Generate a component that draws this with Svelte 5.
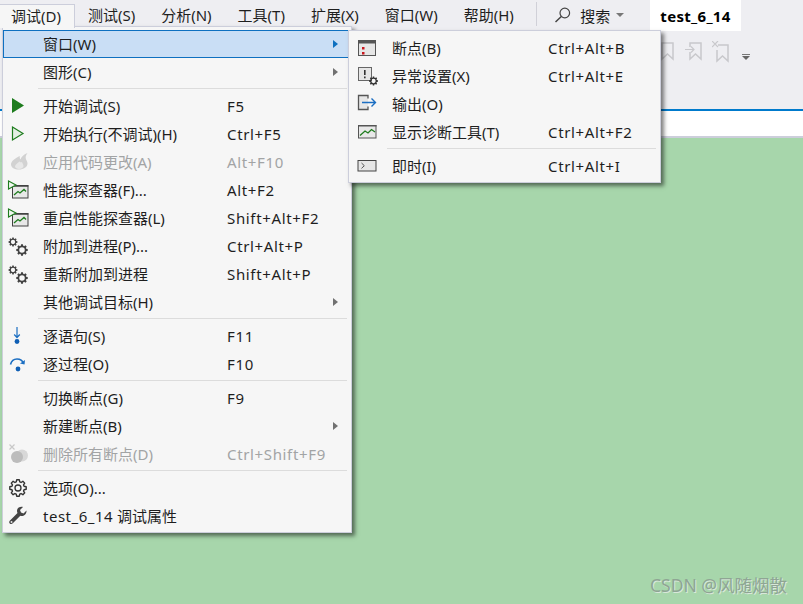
<script>
  const menus = ["调试(D)", "测试(S)", "分析(N)", "工具(T)", "扩展(X)", "窗口(W)", "帮助(H)"];

  const items = [
    { label: "窗口(W)", arrow: true, active: true },
    { label: "图形(C)", arrow: true },
    { sep: true },
    { icon: "play", label: "开始调试(S)", key: "F5" },
    { icon: "playo", label: "开始执行(不调试)(H)", key: "Ctrl+F5" },
    { icon: "flame", label: "应用代码更改(A)", key: "Alt+F10", off: true },
    { icon: "profiler", label: "性能探查器(F)...", key: "Alt+F2" },
    { icon: "profiler", label: "重启性能探查器(L)", key: "Shift+Alt+F2" },
    { icon: "gears", label: "附加到进程(P)...", key: "Ctrl+Alt+P" },
    { icon: "gears", label: "重新附加到进程", key: "Shift+Alt+P" },
    { label: "其他调试目标(H)", arrow: true },
    { sep: true },
    { icon: "into", label: "逐语句(S)", key: "F11" },
    { icon: "over", label: "逐过程(O)", key: "F10" },
    { sep: true },
    { label: "切换断点(G)", key: "F9" },
    { label: "新建断点(B)", arrow: true },
    { icon: "clear", label: "删除所有断点(D)", key: "Ctrl+Shift+F9", off: true },
    { sep: true },
    { icon: "gear", label: "选项(O)..." },
    { icon: "wrench", latin: "test_6_14", label: " 调试属性" },
  ];

  const subItems = [
    { icon: "bp", label: "断点(B)", key: "Ctrl+Alt+B" },
    { icon: "exc", label: "异常设置(X)", key: "Ctrl+Alt+E" },
    { icon: "out", label: "输出(O)" },
    { icon: "diag", label: "显示诊断工具(T)", key: "Ctrl+Alt+F2" },
    { sep: true },
    { icon: "imm", label: "即时(I)", key: "Ctrl+Alt+I" },
  ];

  // toothed outline, hole optional (punched with evenodd)
  function gearPath(cx, cy, r, teeth = 8, hole = 0.48) {
    const pts = [];
    const step = (Math.PI * 2) / teeth;
    for (let i = 0; i < teeth; i++) {
      const a = i * step;
      const w = step * 0.2;
      const rin = r * 0.76;
      pts.push([a - step * 0.5 + w * 0.7, rin], [a - w, r], [a + w, r], [a + step * 0.5 - w * 0.7, rin]);
    }
    const outer = pts
      .map(([a, d], i) => `${i ? "L" : "M"}${(cx + d * Math.cos(a)).toFixed(2)} ${(cy + d * Math.sin(a)).toFixed(2)}`)
      .join("");
    if (!hole) return `${outer}Z`;
    const h = r * hole;
    return `${outer}ZM${cx - h} ${cy}a${h} ${h} 0 1 0 ${h * 2} 0a${h} ${h} 0 1 0 ${-h * 2} 0Z`;
  }
</script>

{#snippet icon(name)}
  <svg width="24" height="24" viewBox="0 0 24 24">
    {#if name === "play"}
      <polygon points="7,4 19,11.5 7,19" fill="#1e7c1e" />
    {:else if name === "playo"}
      <polygon points="7.5,5 18,11.5 7.5,18" fill="#e3efe3" stroke="#1e7c1e" stroke-width="1.2" />
    {:else if name === "flame"}
      <path d="M22.5 3C18.5 4.500 16 7 15.500 9.500 14.800 8.500 14.600 7.500 14.800 6 10.500 8 6 11 6 14.500 6 17.500 9.500 19.500 14 19.500s8.500-2.500 8.500-6c0-2-1.500-3.500-1.800-5.500-.2-1.800.6-3.500 1.800-5z" fill="#d2d2d2" />
      <path d="M14.500 11.500c-2 2-4.500 3.200-4.500 5 0 1.500 2 2.500 4 2.500s4.500-1 4.500-3c0-1.500-1.200-2.500-1.500-4-.8.5-1.500.5-2.500-.5z" fill="#e8e8e8" />
    {:else if name === "profiler"}
      <rect x="7.5" y="8" width="15.5" height="12" fill="#e8e8e8" stroke="#424242" />
      <rect x="7" y="7" width="16.5" height="1.5" fill="#424242" />
      <polyline points="9,17 13,13.5 15,15 19,11.5 21,13.5" fill="none" stroke="#1e7c1e" stroke-width="1.3" />
      <polygon points="3.5,3 11,7 3.5,11" fill="#f0f6f0" stroke="#1e7c1e" stroke-width="1.1" />
    {:else if name === "gears"}
      <path d={gearPath(8, 8, 4.5)} fill="#424242" fill-rule="evenodd" />
      <path d={gearPath(17, 16, 5.8)} fill="#424242" fill-rule="evenodd" />
    {:else if name === "into"}
      <path d="M12 3v10M9.200 10.500l2.800 3 2.800-3" fill="none" stroke="#1b6ec2" stroke-width="1.2" />
      <circle cx="12" cy="17.5" r="2.4" fill="#0f5fb5" />
    {:else if name === "over"}
      <path d="M5.500 12.500C6.500 8.500 9 7 12 7s5.500 1.500 6.500 4.500" fill="none" stroke="#1b6ec2" stroke-width="1.6" />
      <path d="M15 11.500l4.500 1 .5-4.500z" fill="#1b6ec2" />
      <circle cx="13" cy="17" r="2.4" fill="#0f5fb5" />
    {:else if name === "clear"}
      <path d="M4.500 2.500l5 5M9.500 2.500l-5 5" stroke="#c8c8c8" stroke-width="1.2" />
      <circle cx="17" cy="13.5" r="6" fill="#d8d8d8" />
      <circle cx="12" cy="15" r="6" fill="#bcbcbc" />
    {:else if name === "gear"}
      <path d={gearPath(13, 12, 8.3, 8, 0)} fill="none" stroke="#333" stroke-width="1.4" stroke-linejoin="round" />
      <circle cx="13" cy="12" r="3" fill="none" stroke="#333" stroke-width="1.3" />
    {:else if name === "wrench"}
      <path d="M21.500 6.500l-3 3-2.500-1-1-2.500 3-3c-3-.8-6 1-6 4 0 .8.200 1.500.5 2L5 16.500c-1 1-1 2.200-.2 3s2 .8 3-.2l7.500-7.500c3 1 6.500-1.500 6.200-5.300z" fill="#444" />
      <circle cx="6.5" cy="18" r="1" fill="#e8e8e8" />
    {:else if name === "bp"}
      <rect x="3.5" y="4.500" width="17" height="15" fill="#e6e6e6" stroke="#555" />
      <rect x="3" y="4" width="18" height="3.5" fill="#555" />
      <rect x="7" y="11" width="2.5" height="2.5" fill="#c8161d" />
      <rect x="7" y="16" width="2.5" height="2.5" fill="#c8161d" />
    {:else if name === "exc"}
      <rect x="3.5" y="3.500" width="13" height="13" fill="#e6e6e6" stroke="#666" />
      <rect x="9" y="6" width="1.6" height="5" fill="#333" />
      <rect x="9" y="12.5" width="1.6" height="1.8" fill="#333" />
      <path d={gearPath(18.5, 17, 4.5)} fill="#333" fill-rule="evenodd" />
    {:else if name === "out"}
      <path d="M13 6.500V3.500H3.500v14H13v-3" fill="#e6e6e6" stroke="#555" stroke-width="1.3" />
      <path d="M7 10.500h13M16.500 6.500l4 4-4 4" fill="none" stroke="#1b6ec2" stroke-width="1.4" />
    {:else if name === "diag"}
      <rect x="3.5" y="5.500" width="17.500" height="12.500" fill="#e8e8e8" stroke="#555" />
      <rect x="3" y="5" width="18.5" height="1.5" fill="#555" />
      <polyline points="5,15.5 10,11 13,13 16.5,9.5 20,12" fill="none" stroke="#1e7c1e" stroke-width="1.3" />
    {:else if name === "imm"}
      <rect x="3" y="6.500" width="18" height="10.500" fill="#e6e6e6" stroke="#444" />
      <path d="M6.500 9l2.800 2.700-2.800 2.700" fill="none" stroke="#555" stroke-width="1" />
    {/if}
  </svg>
{/snippet}

{#snippet rows(list)}
  {#each list as item}
    {#if item.sep}
      <div class="sep"></div>
    {:else}
      <div class="row" class:active={item.active} class:off={item.off}>
        <span class="ico">{#if item.icon}{@render icon(item.icon)}{/if}</span>
        <span class="label">{#if item.latin}<span class="latin">{item.latin}</span>{/if}{item.label}</span>
        <span class="key">{item.key ?? ""}</span>
        {#if item.arrow}<span class="arrow"></span>{/if}
      </div>
    {/if}
  {/each}
{/snippet}

<div class="window">
  <div class="top">
    <div class="menubar">
      {#each menus as m, i}
        <div class="menu" class:open={i === 0}>{m}</div>
      {/each}
      <div class="divider"></div>
      <div class="search">
        <svg width="18" height="18" viewBox="0 0 18 18">
          <circle cx="10.8" cy="7" r="4.8" fill="none" stroke="#444" stroke-width="1.2" />
          <path d="M7.300 10.500L1.500 16" stroke="#444" stroke-width="1.5" />
        </svg>
        <span>搜索</span>
        <i class="caret"></i>
      </div>
      <div class="title">test_6_14</div>
    </div>
    <div class="toolbar">
      <svg class="tool" width="18" height="20" viewBox="0 0 18 20">
        <path d="M4 2h11v16l-5.500-5L4 18z" fill="none" stroke="#c8c8cc" stroke-width="1.5" />
      </svg>
      <svg class="tool" width="18" height="20" viewBox="0 0 18 20">
        <path d="M5 6V2h11v16l-5.500-5L5 18v-7" fill="none" stroke="#c8c8cc" stroke-width="1.5" />
        <path d="M0 8.500h9M6 5.500l3 3-3 3" fill="none" stroke="#c8c8cc" stroke-width="1.2" />
      </svg>
      <svg class="tool" width="18" height="22" viewBox="0 0 18 22">
        <path d="M6 4h10v16l-5.500-5L5 20V9" fill="none" stroke="#c8c8cc" stroke-width="1.5" />
        <path d="M0 0l6 6M6 0L0 6" stroke="#c8c8cc" stroke-width="1.2" />
      </svg>
      <div class="overflow"><b></b><i class="caret dark"></i></div>
    </div>
  </div>
  <div class="tabline"></div>
  <div class="strip"></div>
  <div class="editor">
    <span class="mark">CSDN @风随烟散</span>
  </div>

  <div class="dropdown">{@render rows(items)}</div>
  <div class="dropdown sub">{@render rows(subItems)}</div>
</div>

<style>
  :global(body) {
    margin: 0;
    font-family: "Noto Sans", "Noto Sans CJK SC", sans-serif;
    font-size: 15px;
    color: #1e1e1e;
  }

  .window {
    position: relative;
    width: 803px;
    height: 604px;
    overflow: hidden;
    display: flex;
    flex-direction: column;
  }

  .top {
    height: 109px;
    background: #eeeef2;
  }

  .menubar {
    display: flex;
    height: 31px;
    align-items: flex-start;
  }

  .menu {
    padding: 0 13px;
    height: 22px;
    margin-top: 4px;
    line-height: 22px;
    white-space: nowrap;
  }

  .menu.open {
    position: relative;
    z-index: 2;
    height: 23px;
    padding-left: 11px;
    background: #f6f6f6;
    border: 1px solid #cccedb;
    border-width: 1px 1px 0 0;
  }

  .divider {
    width: 1px;
    height: 24px;
    margin: 2px 0 0 9.5px;
    background: #d0d0d8;
  }

  .search {
    display: flex;
    align-items: center;
    height: 30px;
    margin-left: 17px;
    gap: 8px;
    width: 96px;
  }

  .caret {
    width: 0;
    height: 0;
    border: 4px solid transparent;
    border-top-color: #777;
    border-bottom: 0;
    margin-left: -2px;
  }

  .title {
    background: #fff;
    height: 31px;
    line-height: 33px;
    padding: 0 10px;
    font-weight: 700;
    color: #000;
    letter-spacing: 0.3px;
  }

  .toolbar {
    display: flex;
    justify-content: flex-end;
    align-items: flex-start;
    gap: 9px;
    padding: 10px 53px 0 0;
  }

  .overflow {
    display: flex;
    flex-direction: column;
    align-items: center;
    gap: 1px;
    margin: 13px 0 0 3px;
  }

  .overflow b {
    width: 8px;
    height: 1px;
    background: #777;
  }

  .caret.dark {
    margin: 0;
    border-top-color: #666;
  }

  .tabline {
    height: 2px;
    background: #007acc;
  }

  .strip {
    height: 25px;
    background: #fff;
    border-bottom: 2px solid #cccedb;
  }

  .editor {
    flex: 1;
    background: #a7d6ab;
    display: flex;
    align-items: flex-end;
    justify-content: flex-end;
    padding: 0 16px 7px 0;
  }

  .mark {
    font-size: 17.5px;
    color: #8fa594;
    text-shadow: 1px 1px 0 #d9e8da;
  }

  .dropdown {
    position: absolute;
    z-index: 1;
    left: 2px;
    top: 26px;
    width: 348px;
    padding: 3px 0 2px;
    background: #f6f6f6;
    border: 1px solid #cccedb;
    box-shadow: 3px 3px 4px rgba(0, 0, 0, 0.5);
  }

  .dropdown.sub {
    left: 348px;
    top: 30px;
    width: 311px;
  }

  .row {
    position: relative;
    display: flex;
    align-items: center;
    height: 28px;
    white-space: nowrap;
  }

  .row.active {
    background: #c9def5;
    outline: 1px solid #0e70c0;
    outline-offset: -1px;
  }

  .row.off {
    color: #a2a4a5;
  }

  .ico {
    width: 24px;
    height: 24px;
    margin-left: 2px;
    margin-right: 14px;
    flex: none;
  }

  .sub .ico {
    margin-left: 6px;
    margin-right: 13px;
  }

  .label {
    width: 184px;
    flex: none;
    margin-top: -2px;
  }

  .latin {
    letter-spacing: 0.5px;
  }

  .sub .label {
    width: 156px;
  }

  .key {
    letter-spacing: 0.65px;
  }

  .arrow {
    position: absolute;
    right: 13px;
    top: 10px;
    width: 0;
    height: 0;
    border: 4px solid transparent;
    border-left: 5px solid #717171;
    border-right: 0;
  }

  .row.active .arrow {
    border-left-color: #0e70c0;
  }

  .sep {
    height: 1px;
    margin: 2px 4px 3px 35px;
    background: #dcdcdc;
  }

  .sub .sep {
    margin-left: 38px;
  }
</style>
